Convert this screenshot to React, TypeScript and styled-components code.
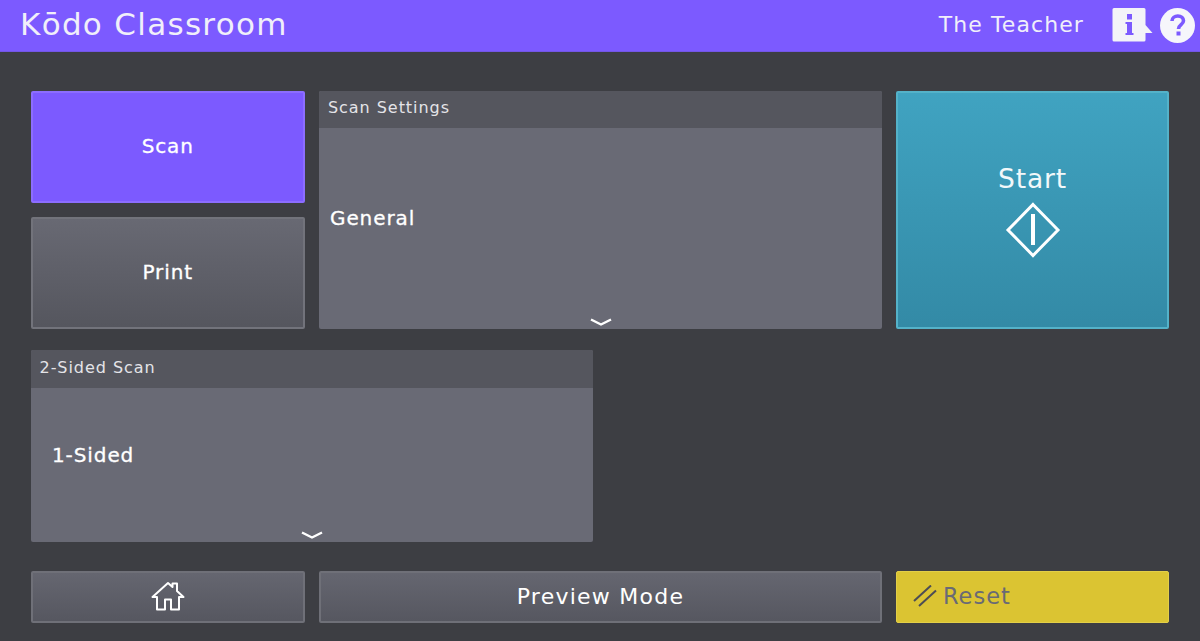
import styled, { createGlobalStyle } from "styled-components";

const GlobalStyle = createGlobalStyle`
    html, body {
        margin: 0;
        height: 100%;
        background: #3d3e43;
    }
    * {
        box-sizing: border-box;
    }
`;

const Page = styled.div`
    width: 1200px;
    height: 641px;
    overflow: hidden;
    background: #3d3e43;
    font-family: "DejaVu Sans", sans-serif;
    color: #fff;
`;

const Header = styled.header`
    display: flex;
    align-items: center;
    height: 52px;
    padding: 0 5px 4px 20px;
    background: #7c5aff;
    border-bottom: 1px solid #7356e6;
`;

const Title = styled.h1`
    flex: 1;
    margin: 0;
    font-size: 31px;
    font-weight: 400;
    letter-spacing: 1.3px;
    color: #f0effa;
`;

const UserName = styled.span`
    margin-right: 28px;
    padding-top: 2px;
    font-size: 22px;
    letter-spacing: 1.1px;
    color: #f0effa;
`;

const HeaderIcons = styled.div`
    display: flex;
    align-items: center;
    gap: 7px;
    margin-top: 3px;
`;

const Content = styled.main`
    display: flex;
    flex-direction: column;
    padding: 38.5px 31px 0 30.5px;
`;

const Row = styled.div<{ $gapTop?: number }>`
    display: flex;
    gap: 14px;
    margin-top: ${(props) => props.$gapTop ?? 0}px;
`;

const Column = styled.div`
    display: flex;
    flex-direction: column;
    gap: 14px;
    width: 274.5px;
`;

const ModeButton = styled.button<{ $active?: boolean }>`
    width: 100%;
    height: 112.25px;
    padding: 0 0 1px;
    border-radius: 2px;
    border: 2px solid ${(props) => (props.$active ? "#8c6dff" : "#72737b")};
    background: ${(props) =>
        props.$active ? "#7c5aff" : "linear-gradient(#686973, #55565e)"};
    color: #fff;
    font-family: inherit;
    font-size: 20px;
    font-weight: 500;
    letter-spacing: 0.9px;
    -webkit-text-stroke: 0.3px #fff;
`;

const Panel = styled.section<{ $height: number; $width: number }>`
    display: flex;
    flex-direction: column;
    width: ${(props) => props.$width}px;
    height: ${(props) => props.$height}px;
    border-radius: 2px;
    overflow: hidden;
    background: #696a75;
`;

const PanelHeader = styled.div`
    display: flex;
    align-items: center;
    height: 37.5px;
    padding: 0 0 3px 9px;
    background: #55565e;
    color: #e4e4e8;
    font-size: 16px;
    letter-spacing: 0.95px;
`;

const PanelBody = styled.div<{ $indent: number }>`
    position: relative;
    flex: 1;
    display: flex;
    align-items: center;
    padding: 0 0 ${(props) => (props.$indent > 15 ? 20 : 21)}px ${(props) => props.$indent}px;
    font-size: 20px;
    font-weight: 500;
    letter-spacing: 0.9px;
    -webkit-text-stroke: 0.3px #fff;
`;

const Chevron = styled.svg`
    position: absolute;
    left: 50%;
    bottom: 1px;
    width: 24px;
    height: 11px;
    margin-left: -12px;
`;

const StartButton = styled.button`
    display: flex;
    flex-direction: column;
    align-items: center;
    width: 273px;
    height: 238.5px;
    padding: 70px 0 0;
    border-radius: 2px;
    border: 2px solid #54b2c9;
    background: linear-gradient(#40a3c1, #338aa6);
    color: #f2f8fa;
    font-family: inherit;
    font-size: 26.5px;
    letter-spacing: 0.85px;
`;

const StartIcon = styled.svg`
    width: 56px;
    height: 56px;
    margin-top: 8px;
`;

const BarButton = styled.button<{ $width: number }>`
    display: flex;
    align-items: center;
    justify-content: center;
    width: ${(props) => props.$width}px;
    height: 51.5px;
    padding: 0 0 1px;
    border-radius: 2px;
    border: 2px solid #6f7078;
    background: linear-gradient(#656670, #565760);
    color: #fff;
    font-family: inherit;
    font-size: 22px;
    letter-spacing: 1.25px;
`;

const ResetButton = styled.button`
    display: flex;
    align-items: center;
    gap: 6px;
    width: 273px;
    height: 51.5px;
    padding: 0 0 2px 16px;
    border-radius: 2px;
    border: 1px solid #e3cf48;
    background: #dbc432;
    color: #696a75;
    font-family: inherit;
    font-size: 22.5px;
    letter-spacing: 1px;
`;

const ChevronIcon = () => (
    <Chevron viewBox="0 0 24 11" fill="none">
        <path d="M2 2.5 L12 7.5 L22 2.5" stroke="#fff" strokeWidth="2.4" strokeLinejoin="round" />
    </Chevron>
);

export default function App() {
    return (
        <Page>
            <GlobalStyle />
            <Header>
                <Title>Kōdo Classroom</Title>
                <UserName>The Teacher</UserName>
                <HeaderIcons>
                    <svg width="41" height="36" viewBox="0 0 41 36">
                        <path
                            d="M2 1 H32 a1.500 1.500 0 0 1 1.500 1.500 V18 L40.500 26 H33.500 V33 a1.500 1.500 0 0 1 -1.500 1.500 H2 a1.500 1.500 0 0 1 -1.500 -1.500 V2.500 a1.500 1.500 0 0 1 1.500 -1.500 Z"
                            fill="#f3f3f8"
                        />
                        <rect x="15" y="7" width="5" height="5.500" fill="#7c5aff" />
                        <path d="M13.500 15 H20 V26 H21.500 V28 H13.500 V26 H15 V17 H13.500 Z" fill="#7c5aff" />
                    </svg>
                    <svg width="35" height="35" viewBox="0 0 35 35">
                        <circle cx="17.500" cy="17.500" r="17.500" fill="#f6f6fb" />
                        <path
                            d="M12 13 C12 9.800 14.800 8 17.800 8 C21.200 8 23.500 10 23.500 12.800 C23.500 16.800 18.500 16.500 18.500 21"
                            fill="none"
                            stroke="#7c5aff"
                            strokeWidth="3.600"
                        />
                        <rect x="16.500" y="23.500" width="4" height="4" fill="#7c5aff" />
                    </svg>
                </HeaderIcons>
            </Header>
            <Content>
                <Row>
                    <Column>
                        <ModeButton $active>Scan</ModeButton>
                        <ModeButton>Print</ModeButton>
                    </Column>
                    <Panel $width={563} $height={238.5}>
                        <PanelHeader>Scan Settings</PanelHeader>
                        <PanelBody $indent={11}>
                            General
                            <ChevronIcon />
                        </PanelBody>
                    </Panel>
                    <StartButton>
                        Start
                        <StartIcon viewBox="0 0 56 56" fill="none">
                            <path d="M28 2.500 L53 28 L28 53.500 L3 28 Z" stroke="#fff" strokeWidth="3" />
                            <rect x="26" y="12" width="4" height="31" fill="#fff" />
                        </StartIcon>
                    </StartButton>
                </Row>
                <Row $gapTop={21}>
                    <Panel $width={562.5} $height={192}>
                        <PanelHeader>2-Sided Scan</PanelHeader>
                        <PanelBody $indent={21.5}>
                            1-Sided
                            <ChevronIcon />
                        </PanelBody>
                    </Panel>
                </Row>
                <Row $gapTop={29}>
                    <BarButton $width={274.5}>
                        <svg width="34" height="30" viewBox="0 0 34 30" fill="none">
                            <path
                                d="M1.500 16 L17 2 L21.500 6 V2.500 H26 V10 L32.500 16 H28 V28.500 H20 V18.500 H14 V28.500 H6 V16 Z"
                                stroke="#fff"
                                strokeWidth="2"
                                strokeLinejoin="round"
                            />
                        </svg>
                    </BarButton>
                    <BarButton $width={563}>Preview Mode</BarButton>
                    <ResetButton>
                        <svg width="24" height="22" viewBox="0 0 24 22" fill="none">
                            <path d="M1 16 L18 0.500 M6 21 L23 5.500" stroke="#4c4d55" strokeWidth="2" />
                        </svg>
                        Reset
                    </ResetButton>
                </Row>
            </Content>
        </Page>
    );
}
